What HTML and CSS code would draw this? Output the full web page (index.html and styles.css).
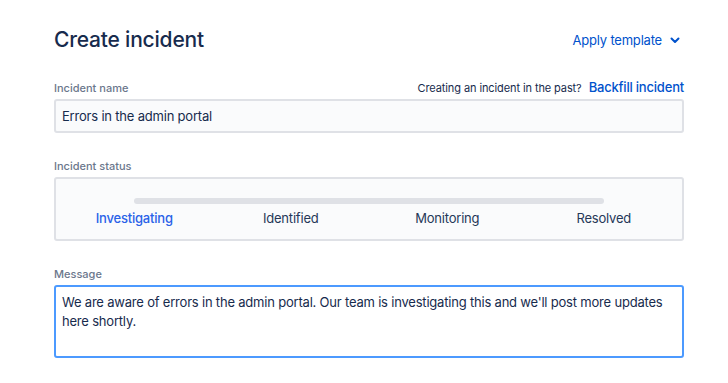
FILE: index.html
```
<!DOCTYPE html>
<html lang="en">
<head>
  <meta charset="UTF-8" />
  <meta name="viewport" content="width=device-width, initial-scale=1.0"/>
  <title>Create incident</title>
  <link rel="stylesheet" href="styles.css">
</head>
<body>

  <main class="page">
    <!-- Header -->
    <div class="page-header">
      <h1>Create incident</h1>
      <a href="#" class="template-link">Apply template
        <svg width="10" height="7" viewBox="0 0 10 7"><path d="M1.5 1.5 L5 5 L8.5 1.5" fill="none" stroke="currentColor" stroke-width="2" stroke-linecap="round" stroke-linejoin="round"/></svg>
      </a>
    </div>

    <!-- Incident name -->
    <div class="field">
      <div class="field-top">
        <label class="label">Incident name</label>
        <span class="hint">Creating an incident in the past? <a href="#">Backfill incident</a></span>
      </div>
      <input class="input" type="text" value="Errors in the admin portal">
    </div>

    <!-- Incident status -->
    <div class="field">
      <label class="label">Incident status</label>
      <div class="status-box">
        <div class="status-track"></div>
        <div class="status-steps">
          <span class="active">Investigating</span>
          <span>Identified</span>
          <span>Monitoring</span>
          <span>Resolved</span>
        </div>
      </div>
    </div>

    <!-- Message -->
    <div class="field">
      <label class="label">Message</label>
      <textarea class="textarea">We are aware of errors in the admin portal. Our team is investigating this and we'll post more updates here shortly.</textarea>
    </div>
  </main>

</body>
</html>
```

FILE: styles.css
```
body {
  font-family: Inter, "Noto Sans", sans-serif;
  margin: 0;
  padding: 0;
  background-color: white;
  color: #172b4d;
}

.page {
  width: 630px;
  margin-left: 54px;
  padding-top: 26px;
}

.page-header {
  display: flex;
  justify-content: space-between;
  align-items: center;
  height: 28px;
}

.page-header h1 {
  margin: 0;
  font-size: 21px;
  font-weight: 500;
  line-height: 28px;
  color: #172b4d;
  letter-spacing: -0.2px;
}

.template-link {
  display: flex;
  align-items: center;
  gap: 8px;
  margin-right: 4px;
  font-size: 13px;
  letter-spacing: -0.2px;
  color: #0052cc;
  text-decoration: none;
}

.field {
  margin-top: 26px;
}

.field-top {
  display: flex;
  justify-content: space-between;
  align-items: center;
}

.label {
  display: block;
  font-size: 11px;
  font-weight: 500;
  line-height: 14px;
  color: #6b778c;
  margin-bottom: 4px;
}

.hint {
  font-size: 11px;
  letter-spacing: -0.1px;
  color: #172b4d;
  line-height: 14px;
  margin-bottom: 4px;
}

.hint a {
  margin-left: 4px;
  font-size: 13px;
  font-weight: 500;
  letter-spacing: -0.2px;
  color: #0052cc;
  text-decoration: none;
}

.input {
  display: block;
  box-sizing: border-box;
  width: 100%;
  height: 34px;
  padding: 0 6px;
  border: 2px solid #dfe1e6;
  border-radius: 3px;
  background-color: #fafbfc;
  font-family: inherit;
  font-size: 13px;
  letter-spacing: -0.2px;
  color: #172b4d;
}

.status-box {
  border: 2px solid #dfe1e6;
  border-radius: 3px;
  background-color: #fafbfc;
  padding: 19px 0 13px;
}

.status-track {
  height: 6px;
  margin: 0 12.5%;
  border-radius: 3px;
  background-color: #dfe1e6;
}

.status-steps {
  display: grid;
  grid-template-columns: repeat(4, 1fr);
  margin-top: 6px;
  font-size: 13px;
  letter-spacing: -0.2px;
  line-height: 16px;
  text-align: center;
  color: #253858;
}

.status-steps .active {
  color: #2962e8;
  font-weight: 500;
}

.textarea {
  display: block;
  box-sizing: border-box;
  width: 100%;
  height: 73px;
  padding: 6px 6px;
  border: 2px solid #4c9aff;
  border-radius: 3px;
  background-color: white;
  font-family: inherit;
  font-size: 13px;
  letter-spacing: -0.2px;
  line-height: 19px;
  color: #172b4d;
  resize: none;
  outline: none;
}
```
